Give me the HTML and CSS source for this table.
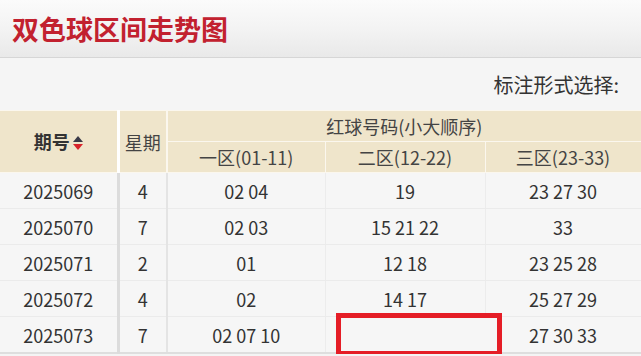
FILE: index.html
```html
<!DOCTYPE html>
<html lang="zh">
<head>
<meta charset="utf-8">
<title>双色球区间走势图</title>
<link rel="stylesheet" href="styles.css">
</head>
<body>
<div class="page">
  <header class="titlebar">
    <h1 class="title">双色球区间走势图</h1>
  </header>
  <div class="toolbar">
    <span class="mark-label">标注形式选择:</span>
  </div>
  <div class="table-wrap">
    <table class="trend">
      <colgroup>
        <col class="c-issue"><col class="c-week"><col class="c-z1"><col class="c-z2"><col class="c-z3">
      </colgroup>
      <thead>
        <tr>
          <th rowspan="2" class="th-issue">期号<span class="sort"><span class="up"></span><span class="down"></span></span></th>
          <th rowspan="2" class="th-week">星期</th>
          <th colspan="3" class="th-red">红球号码(小大顺序)</th>
        </tr>
        <tr>
          <th class="th-zone">一区(01-11)</th>
          <th class="th-zone">二区(12-22)</th>
          <th class="th-zone">三区(23-33)</th>
        </tr>
      </thead>
      <tbody>
        <tr><td class="td-issue">2025069</td><td class="td-week">4</td><td>02 04</td><td>19</td><td>23 27 30</td></tr>
        <tr><td class="td-issue">2025070</td><td class="td-week">7</td><td>02 03</td><td>15 21 22</td><td>33</td></tr>
        <tr><td class="td-issue">2025071</td><td class="td-week">2</td><td>01</td><td>12 18</td><td>23 25 28</td></tr>
        <tr><td class="td-issue">2025072</td><td class="td-week">4</td><td>02</td><td>14 17</td><td>25 27 29</td></tr>
        <tr><td class="td-issue">2025073</td><td class="td-week">7</td><td>02 07 10</td><td class="td-hidden"><span class="hidebox"></span></td><td>27 30 33</td></tr>
      </tbody>
    </table>
  </div>
</div>
</body>
</html>
```
FILE: styles.css
```css
html, body {
  margin: 0;
  padding: 0;
  background: #f4f4f4;
}
body {
  font-family: "Noto Sans CJK SC", "Noto Sans", sans-serif;
  color: #333;
  overflow: hidden;
}
.page {
  width: 641px;
}
.titlebar {
  height: 57px;
  border-bottom: 1px solid #d6d6d6;
  background: linear-gradient(#fbfbfb, #f3f3f3 50%, #e9e9e9);
  display: flex;
  align-items: center;
  padding-left: 12px;
}
.title {
  margin: 0;
  font-size: 27px;
  font-weight: 700;
  color: #c2212f;
  letter-spacing: 0;
  line-height: 1;
}
.toolbar {
  height: 52px;
  display: flex;
  align-items: center;
  justify-content: flex-end;
  padding-right: 22px;
  background: #f5f5f5;
}
.mark-label {
  font-size: 20px;
  color: #333;
}
.table-wrap {
  position: relative;
}
.trend {
  border-collapse: collapse;
  table-layout: fixed;
  width: 641px;
}
.c-issue { width: 118px; }
.c-week { width: 49px; }
.c-z1 { width: 158px; }
.c-z2 { width: 160px; }
.c-z3 { width: 156px; }
.trend th {
  background: #efe5cb;
  font-weight: 400;
  font-size: 18px;
  color: #444;
  border: 1px solid #fbf7ee;
  padding: 0;
  line-height: 1;
}
.trend thead tr:first-child th.th-red { height: 30px; }
.trend thead tr:last-child th { height: 30px; }
.trend th.th-issue {
  font-weight: 700;
  color: #333;
  border-right: 3px solid #fff;
  border-left: none;
}
.trend th.th-week {
  border-right: 2px solid #fbf7ee;
}
.sort {
  display: inline-flex;
  flex-direction: column;
  vertical-align: middle;
  margin-left: 3px;
  gap: 2px;
  position: relative;
  top: -1px;
}
.sort .up {
  width: 0; height: 0;
  border-left: 5px solid transparent;
  border-right: 5px solid transparent;
  border-bottom: 6px solid #3a3a48;
}
.sort .down {
  width: 0; height: 0;
  border-left: 5px solid transparent;
  border-right: 5px solid transparent;
  border-top: 6px solid #d8232a;
}
.trend td {
  height: 35px;
  padding: 0;
  text-align: center;
  font-size: 18px;
  color: #333;
  background: #f6f6f6;
  border-top: 1px solid #fdfdfd;
  border-bottom: 1px solid #ebebeb;
  border-left: 1px solid #fafafa;
  border-right: 1px solid #ececec;
}
.trend td.td-issue {
  border-left: none;
  border-right: 3px solid #dcdcdc;
}
.trend td.td-week {
  border-right: 2px solid #e4e4e4;
}
.trend tbody tr:last-child td {
  border-bottom: 2px solid #dedede;
}
.td-hidden {
  position: relative;
}
.hidebox {
  position: absolute;
  left: 10px;
  top: -4px;
  width: 166px;
  height: 43px;
  box-sizing: border-box;
  border: 5px solid #e51d26;
  background: #f6f6f6;
}
```
